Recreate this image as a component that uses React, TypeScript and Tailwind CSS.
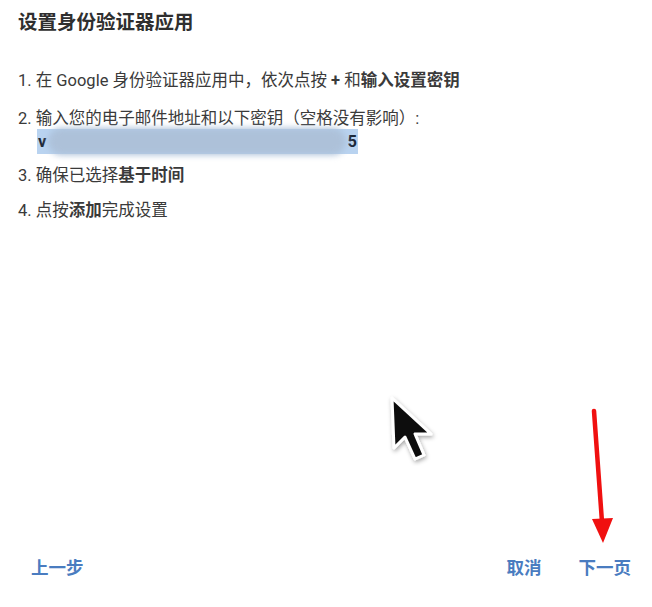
export default function App() {
  return (
    <div
      className="relative flex h-[607px] w-[652px] flex-col bg-white text-[#333333]"
      style={{ fontFamily: 'Roboto, "Noto Sans CJK SC", sans-serif' }}
    >
      <div className="px-[18px] pt-[9px]">
        <h1 className="text-[19.5px] font-bold leading-[28px] text-[#2f2f2f]">设置身份验证器应用</h1>

        <ol className="mt-[32px] flex flex-col text-[16.5px] leading-[24px] text-[#3a3a3a]">
          <li>
            1. 在 Google 身份验证器应用中，依次点按 <b className="font-bold">+</b> 和<b className="font-bold">输入设置密钥</b>
          </li>
          <li className="mt-[14px]">
            <div>2. 输入您的电子邮件地址和以下密钥（空格没有影响）:</div>
            <div className="ml-[19px] -mt-[2px] flex h-[25px] w-[321px] items-center justify-between bg-[#b9d3f0] pl-[1px] pr-[1px] font-bold text-[#1e2a3a]">
              <span>v</span>
              <span className="mx-[2px] h-[27px] flex-1 rounded-full bg-[#adc1d9] blur-[3px]" />
              <span>5</span>
            </div>
          </li>
          <li className="mt-[10px]">
            3. 确保已选择<b className="font-bold">基于时间</b>
          </li>
          <li className="mt-[11px]">
            4. 点按<b className="font-bold">添加</b>完成设置
          </li>
        </ol>
      </div>

      <div className="mt-auto flex items-center pb-[27px] pl-[31px] pr-[21px] text-[17.5px] font-bold leading-[24px] text-[#4a7cc0]">
        <button>上一步</button>
        <button className="ml-auto">取消</button>
        <button className="ml-[37px]">下一页</button>
      </div>

      {/* mouse pointer */}
      <svg className="absolute left-[386px] top-[392px]" width="52" height="74" viewBox="-4 -4 52 74">
        <defs>
          <filter id="sh" x="-30%" y="-30%" width="160%" height="160%">
            <feDropShadow dx="1" dy="2" stdDeviation="2" floodColor="#000" floodOpacity="0.35" />
          </filter>
        </defs>
        <path
          d="M2 2 L4 52 L15 41 L25 63 L34 59 L25 38 L41 38 Z"
          fill="#111"
          stroke="#fff"
          strokeWidth="3"
          strokeLinejoin="round"
          filter="url(#sh)"
        />
      </svg>

      {/* red arrow annotation */}
      <svg className="absolute left-[585px] top-[404px]" width="36" height="145" viewBox="0 0 36 145">
        <line x1="9" y1="7" x2="17" y2="118" stroke="#f01010" strokeWidth="4.5" strokeLinecap="round" />
        <path d="M7 115 L28 114 L18 139 Z" fill="#f01010" />
      </svg>
    </div>
  )
}
